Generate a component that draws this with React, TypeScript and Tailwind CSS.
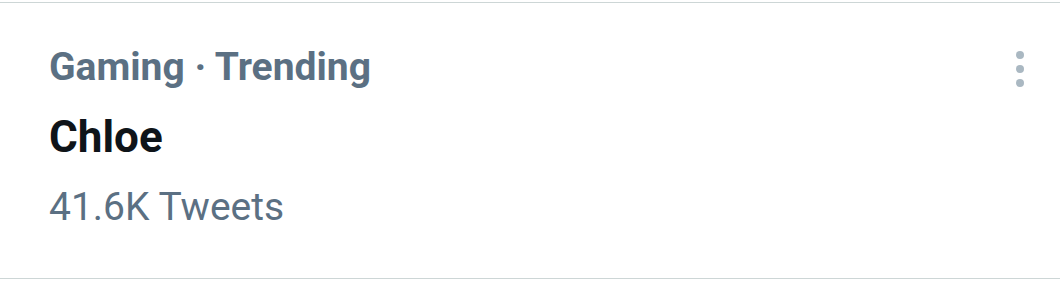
import { FC } from "react";

type TrendProps = {
  context: string;
  name: string;
  count: string;
};

const MoreDots: FC = () => (
  <div className="flex flex-col gap-[6px] mt-[8px]">
    <span className="block w-[8px] h-[8px] rounded-full bg-[#aab8c2]" />
    <span className="block w-[8px] h-[8px] rounded-full bg-[#aab8c2]" />
    <span className="block w-[8px] h-[8px] rounded-full bg-[#aab8c2]" />
  </div>
);

const Trend: FC<TrendProps> = ({ context, name, count }) => (
  <div className="border-y border-[#cdd6d6] bg-white pl-[49px] pr-[36px] pt-[40px] pb-[47px]">
    <div className="flex justify-between items-start">
      <div className="flex flex-col gap-[20px]">
        <p className="text-[39px] leading-[48px] font-bold text-[#5b7083]">{context}</p>
        <p className="text-[44px] leading-[52px] font-bold text-[#0f1419]">{name}</p>
        <p className="text-[39px] leading-[48px] text-[#5b7083]">{count}</p>
      </div>
      <MoreDots />
    </div>
  </div>
);

export default function App() {
  return (
    <div className="w-[1060px] h-[291px] bg-white pt-[2px] font-['Roboto',sans-serif]">
      <Trend context="Gaming · Trending" name="Chloe" count="41.6K Tweets" />
    </div>
  );
}
